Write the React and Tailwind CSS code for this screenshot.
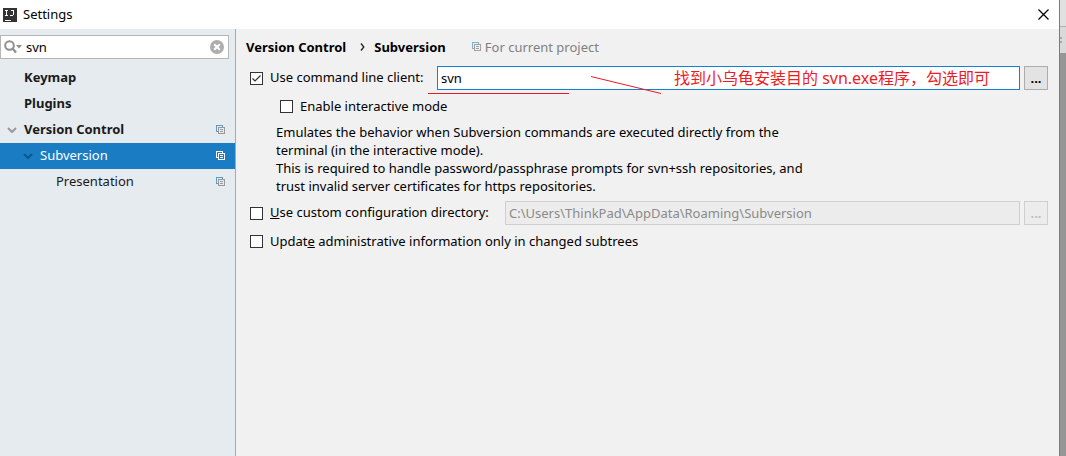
const CopyIcon = ({ className, back, front }) => (
  <svg className={className} width="10" height="10" viewBox="0 0 10 10" fill="none" shapeRendering="crispEdges" aria-hidden="true">
    <path d="M2 6.5H.5V.5H6.5V2" stroke={back} />
    <path d="M2.5 2.5H8.5V8.5H2.5ZM4 4.5H7M4 6.5H7" stroke={front} />
  </svg>
);

const Chevron = ({ color }) => (
  <svg width="10" height="6" viewBox="0 0 10 6" fill="none" aria-hidden="true">
    <path d="M1 1L5 5L9 1" stroke={color} strokeWidth="2" />
  </svg>
);

const Check = ({ id, defaultChecked }) => (
  <span className="relative flex size-[13px] shrink-0">
    <input
      id={id}
      type="checkbox"
      defaultChecked={defaultChecked}
      className="peer size-[13px] appearance-none border border-[#333333] bg-white"
    />
    <svg className="pointer-events-none absolute inset-0 hidden peer-checked:block" width="13" height="13" viewBox="0 0 13 13" fill="none" aria-hidden="true">
      <path d="M2.5 6.5L5 9L10.5 3.5" stroke="#333333" strokeWidth="1.2" />
    </svg>
  </span>
);

function TreeRow({ label, indent, bold, chevron, copy, selected }) {
  return (
    <li className={`flex h-[26px] items-center pr-[9px] ${indent} ${selected ? "bg-[#1a7dc4] text-white" : "text-[#1a1a1a]"}`}>
      <span className="flex w-[17px] shrink-0">
        {chevron && <Chevron color={selected ? "#0f5788" : "#999999"} />}
      </span>
      <a href="#" className={`flex-1 pb-[2px] ${bold ? "font-bold" : ""}`}>{label}</a>
      {copy && <CopyIcon back={selected ? "#ffffff" : "#5c9dc0"} front={selected ? "#ffffff" : "#999999"} />}
    </li>
  );
}

export default function App() {
  return (
    <div className="flex min-h-screen bg-[#969696] font-['Noto_Sans','Noto_Sans_CJK_SC',sans-serif] text-[13px] leading-[18px] text-black">
      <div className="flex min-w-0 flex-1 flex-col border-r border-[#4a8ab8] bg-[#f1f1f1]">
        <header className="flex h-[29px] items-center bg-white pr-[10px] pl-[3px]">
          <svg width="14" height="14" viewBox="0 0 14 14" fill="none" shapeRendering="crispEdges" aria-hidden="true">
            <path d="M0 0H14V14H0Z" fill="#333333" />
            <path d="M2 2.5H5M3.5 2V8M2 7.5H5M8 2.5H11M10.5 2V7M7 7.5H10M2 12.5H8" stroke="#ffffff" />
          </svg>
          <h1 className="ml-[6px] flex-1 pb-[2px]">Settings</h1>
          <button type="button" aria-label="Close">
            <svg width="11" height="11" viewBox="0 0 11 11" fill="none" aria-hidden="true">
              <path d="M.5 .5L10.5 10.5M10.5 .5L.5 10.5" stroke="#000000" strokeWidth="1.2" />
            </svg>
          </button>
        </header>

        <div className="flex flex-1">
          <nav className="w-[236px] shrink-0 border-r border-[#a8a8a8] bg-[#e6ebef] pt-[6px]">
            <div className="mr-[6px] flex h-6 items-center border border-[#b5b5b5] bg-white pr-[4px] pl-[3px]">
              <svg width="18" height="14" viewBox="0 0 18 14" fill="none" aria-hidden="true">
                <circle cx="5.5" cy="5.5" r="4.3" stroke="#8f8f8f" strokeWidth="2" />
                <path d="M8.5 8.5L12 12.5" stroke="#8f8f8f" strokeWidth="2.4" />
                <path d="M12 5H18L15 8.5Z" fill="#8f8f8f" />
              </svg>
              <input aria-label="Search settings" defaultValue="svn" className="ml-1 min-w-0 flex-1 bg-transparent outline-none" />
              <button type="button" aria-label="Clear search">
                <svg width="14" height="14" viewBox="0 0 14 14" fill="none" aria-hidden="true">
                  <circle cx="7" cy="7" r="7" fill="#adadad" />
                  <path d="M4.2 4.2L9.8 9.8M9.8 4.2L4.2 9.8" stroke="#ffffff" strokeWidth="2" />
                </svg>
              </button>
            </div>
            <ul className="mt-[6px]">
              <TreeRow label="Keymap" indent="pl-[7px]" bold />
              <TreeRow label="Plugins" indent="pl-[7px]" bold />
              <TreeRow label="Version Control" indent="pl-[7px]" bold chevron copy />
              <TreeRow label="Subversion" indent="pl-[23px]" chevron copy selected />
              <TreeRow label="Presentation" indent="pl-[39px]" copy />
            </ul>
          </nav>

          <main className="min-w-0 flex-1 pr-[11px] pl-[14px]">
            <div className="-ml-1 flex h-[37px] items-center pb-[2px]">
              <h2 className="flex items-center font-bold">
                <span>Version Control</span>
                <svg className="mr-[9px] ml-[14px]" width="5" height="8" viewBox="0 0 5 8" fill="none" aria-hidden="true">
                  <path d="M1 .5L3.8 4L1 7.5" stroke="#222222" strokeWidth="1.3" />
                </svg>
                <span>Subversion</span>
              </h2>
              <CopyIcon className="ml-[26px]" back="#7db4d0" front="#a0a0a0" />
              <span className="ml-[3px] text-[#808080]">For current project</span>
            </div>

            <div className="relative flex h-6 items-center">
              <Check id="cli" defaultChecked />
              <label htmlFor="cli" className="ml-[7px] w-[167px] shrink-0 pb-[2px]">Use command line client:</label>
              <input
                aria-label="Command line client path"
                defaultValue="svn"
                className="h-6 min-w-0 flex-1 border border-[#0f82d8] bg-white px-[3px] outline-none"
              />
              <button type="button" aria-label="Browse client" className="ml-1 h-6 w-6 border border-[#adadad] bg-[#e3e3e3] font-bold">...</button>
              <span className="pointer-events-none absolute right-[58px] text-[16px] leading-6 whitespace-nowrap text-[#ed1c24]">
                找到小乌龟安装目的 svn.exe程序，勾选即可
              </span>
              <svg className="pointer-events-none absolute top-0 left-[178px]" width="234" height="30" viewBox="0 0 234 30" fill="none" aria-hidden="true">
                <path d="M0 27.5H141M163 10.5L233 27.5" stroke="#ed1c24" />
              </svg>
            </div>

            <div className="flex h-8 items-center pl-[30px]">
              <Check id="interactive" />
              <label htmlFor="interactive" className="ml-[7px]">Enable interactive mode</label>
            </div>

            <p className="mt-px pl-[26px]">
              Emulates the behavior when Subversion commands are executed directly from the<br />
              terminal (in the interactive mode).<br />
              This is required to handle password/passphrase prompts for svn+ssh repositories, and<br />
              trust invalid server certificates for https repositories.
            </p>

            <div className="mt-[6px] flex h-6 items-center">
              <Check id="custom" />
              <label htmlFor="custom" className="ml-[7px] w-[235px] shrink-0 pb-[2px]"><u>U</u>se custom configuration directory:</label>
              <input
                aria-label="Configuration directory path"
                disabled
                defaultValue="C:\Users\ThinkPad\AppData\Roaming\Subversion"
                className="h-6 min-w-0 flex-1 border border-[#cfcfcf] bg-[#ececec] px-[3px] text-[#8a8a8a]"
              />
              <button type="button" disabled aria-label="Browse directory" className="ml-1 h-6 w-6 border border-[#cfcfcf] bg-[#ececec] font-bold text-[#bdbdbd]">...</button>
            </div>

            <div className="flex h-8 items-center">
              <Check id="update" />
              <label htmlFor="update" className="ml-[7px]">Updat<u>e</u> administrative information only in changed subtrees</label>
            </div>
          </main>
        </div>
      </div>
      <div className="w-[6px] shrink-0" aria-hidden="true">
        <div className="h-[27px] border-b border-[#b0b0b0] bg-[#e0e0e0]" />
        <div className="flex h-[26px] flex-col justify-center gap-[2px] bg-[#d9d9d9]">
          <span className="size-[2px] bg-[#aaaaaa]" />
          <span className="size-[2px] bg-[#aaaaaa]" />
        </div>
      </div>
    </div>
  );
}
